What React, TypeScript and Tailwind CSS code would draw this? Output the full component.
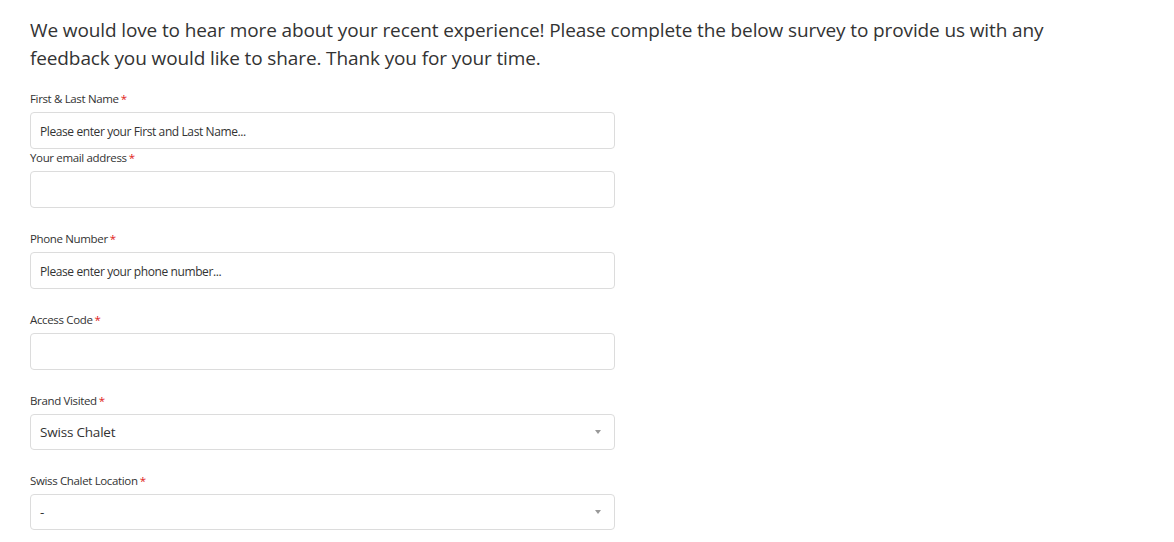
import React from "react";

const font = { fontFamily: '"Open Sans", "Noto Sans", sans-serif' };

function Label({ text }: { text: string }) {
  return (
    <div className="text-[11.5px] leading-[16px] text-[#333] mb-[5px] tracking-[-0.35px]">
      {text}
      <span className="text-[#e02020] ml-[2px]">*</span>
    </div>
  );
}

function Input({ placeholder }: { placeholder?: string }) {
  return (
    <div className="h-[37px] w-[585px] border border-[#dcdcdc] rounded-[4px] bg-white flex items-center px-[9px] text-[12px] text-[#333] tracking-[-0.4px] pt-[3px]">
      {placeholder}
    </div>
  );
}

function Select({ value }: { value: string }) {
  return (
    <div className="h-[36px] w-[585px] border border-[#dcdcdc] rounded-[4px] bg-white flex items-center justify-between pl-[9px] pr-[13px] text-[13.5px] text-[#333] tracking-[-0.2px]">
      <span className="pt-[1px]">{value}</span>
      <svg width="6" height="5" viewBox="0 0 6 5">
        <path d="M0 0 L6 0 L3 4 Z" fill="#999" />
      </svg>
    </div>
  );
}

export default function App() {
  return (
    <div className="bg-white w-[1174px] h-[542px] overflow-hidden pl-[30px] pt-[16px]" style={font}>
      <p className="text-[19px] leading-[28px] text-[#333] tracking-[-0.12px] mb-[19px]">
        We would love to hear more about your recent experience! Please complete the below survey to provide us with any
        <br />
        feedback you would like to share. Thank you for your time.
      </p>
      <div className="flex flex-col">
        <Label text="First & Last Name" />
        <Input placeholder="Please enter your First and Last Name..." />
        <div className="h-[1px]" />
        <Label text="Your email address" />
        <Input />
        <div className="h-[23px]" />
        <Label text="Phone Number" />
        <Input placeholder="Please enter your phone number..." />
        <div className="h-[23px]" />
        <Label text="Access Code" />
        <Input />
        <div className="h-[23px]" />
        <Label text="Brand Visited" />
        <Select value="Swiss Chalet" />
        <div className="h-[23px]" />
        <Label text="Swiss Chalet Location" />
        <Select value="-" />
      </div>
    </div>
  );
}
